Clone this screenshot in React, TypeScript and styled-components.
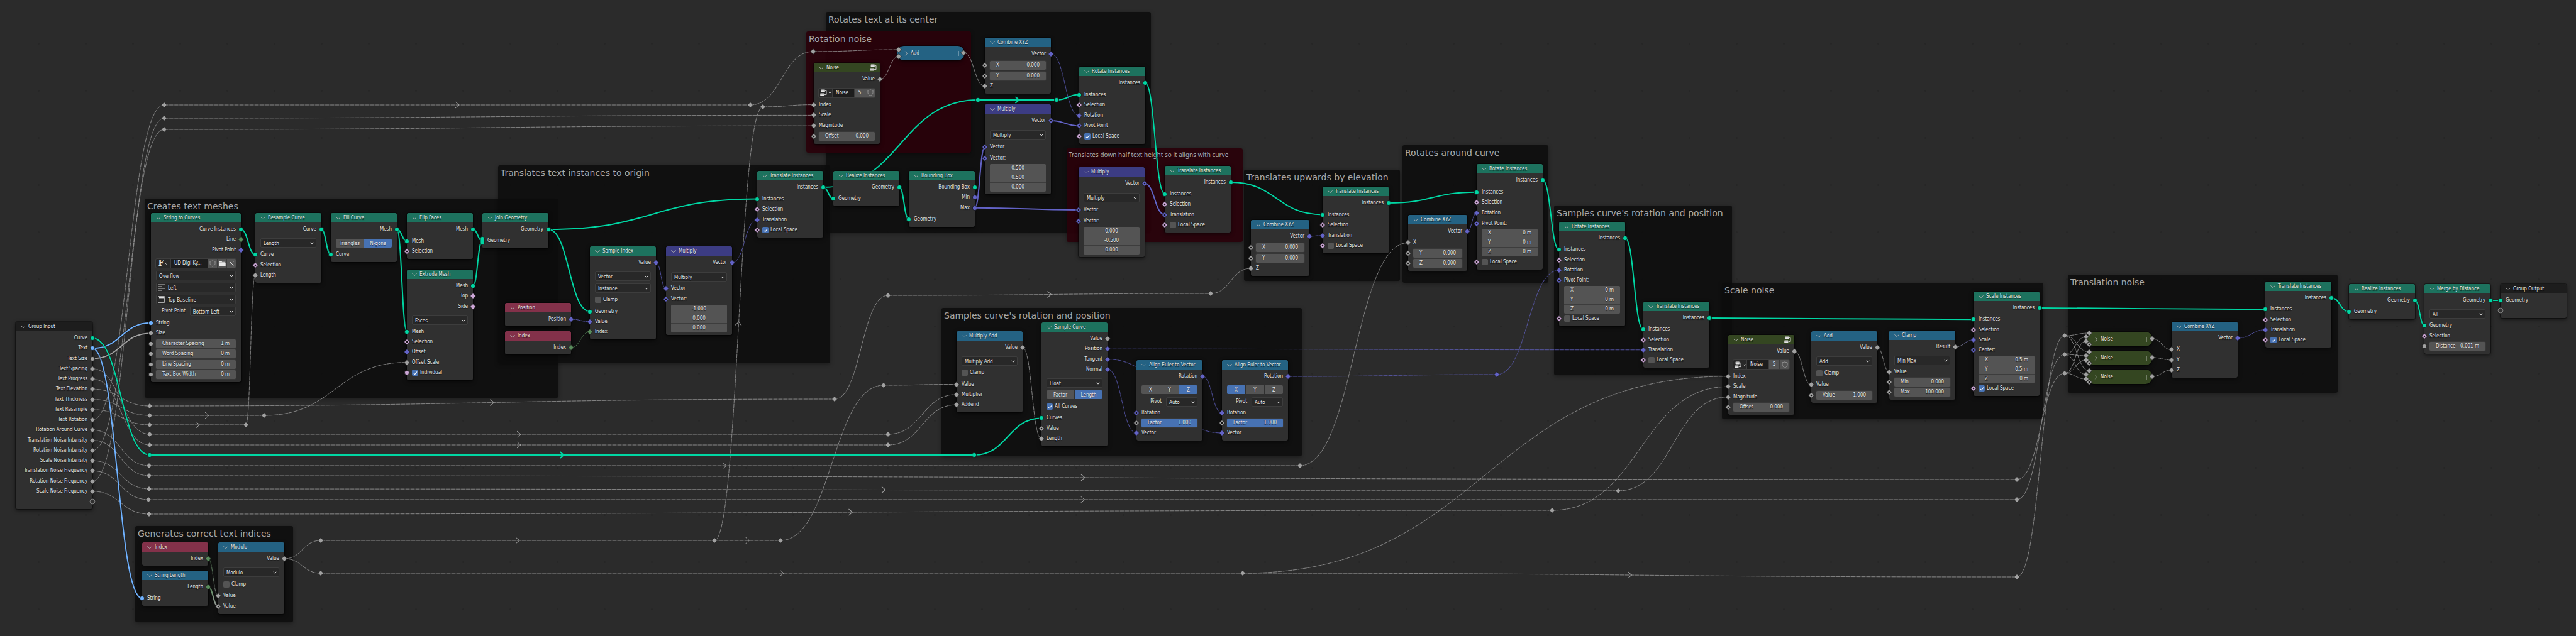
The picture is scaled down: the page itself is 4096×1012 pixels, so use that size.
import React, { useLayoutEffect, useRef, useState } from "react";
import styled, { createGlobalStyle, css } from "styled-components";

/* ---------- theme ---------- */

const SOCKET = {
  geo: "#00d6a3",
  float: "#a1a1a1",
  vec: "#6363c7",
  bool: "#cca6d6",
  int: "#598c5c",
  str: "#70b2ff",
} as const;

const HEADER = {
  geometry: "#1d725e",
  input: "#83314a",
  converter: "#246283",
  vector: "#3c3c83",
  group: "#344621",
  io: "#1d1d1d",
} as const;

type SocketType = keyof typeof SOCKET;
type HeaderType = keyof typeof HEADER;
type Shape = "dot" | "diamond" | "ring" | "open" | "multi";

const GlobalStyle = createGlobalStyle`
  body { margin: 0; background: #2b2b2b; }
  #root { font-family: "DejaVu Sans Condensed", "DejaVu Sans", sans-serif; font-size: 8px; line-height: 16px; color: #e6e6e6; }
  input, select, button { font: inherit; color: inherit; margin: 0; padding: 0; border: 0; background: none; }
`;

/* ---------- canvas ---------- */

const Canvas = styled.main`
  position: relative;
  width: 100%;
  height: 100vh;
  overflow: hidden;
  background-color: #2b2b2b;
  background-image: radial-gradient(circle, #262626 1px, transparent 2px);
  background-size: 75px 75px;
  background-position: 24px 32px;
`;

const Wires = styled.svg`
  position: absolute;
  inset: 0;
  width: 100%;
  height: 100%;
  fill: none;
`;

interface Box {
  $x: number;
  $y: number;
  $w: number;
  $h: number;
}

const FrameBox = styled.section<Box & { $red?: boolean; $small?: boolean }>`
  position: absolute;
  left: ${(p) => p.$x}px;
  top: ${(p) => p.$y}px;
  width: ${(p) => p.$w}px;
  height: ${(p) => p.$h}px;
  box-sizing: border-box;
  padding: ${(p) => (p.$small ? "1px 3px" : "3px 4px")};
  border-radius: 3px;
  background: ${(p) => (p.$red ? "rgba(41, 2, 11, 0.95)" : "rgba(12, 12, 12, 0.85)")};
  box-shadow: 0 2px 6px rgba(0, 0, 0, 0.35);
  h2 {
    margin: 0;
    font-family: ${(p) => (p.$small ? '"Noto Sans"' : '"DejaVu Sans"')}, sans-serif;
    font-weight: 400;
    font-size: ${(p) => (p.$small ? 10 : 14)}px;
    line-height: 18px;
    color: #a8a8a8;
    white-space: nowrap;
  }
`;

const NodeBox = styled.article<Box>`
  position: absolute;
  left: ${(p) => p.$x}px;
  top: ${(p) => p.$y}px;
  width: ${(p) => p.$w}px;
  height: ${(p) => p.$h}px;
  display: flex;
  flex-direction: column;
  border-radius: 3px;
  background: #303030;
  box-shadow: 0 0 0 1px rgba(0, 0, 0, 0.35), 0 2px 6px rgba(0, 0, 0, 0.6);
  text-shadow: 0 1px 1px rgba(0, 0, 0, 0.6);
  white-space: nowrap;
`;

const NodeHeader = styled.header<{ $kind: HeaderType }>`
  flex: none;
  display: flex;
  align-items: center;
  gap: 4px;
  height: 15px;
  padding: 0 5px 0 8px;
  border-radius: 3px 3px 0 0;
  background: ${(p) => HEADER[p.$kind]};
  h3 {
    flex: 1;
    margin: 0;
    font-size: 8px;
    font-weight: 400;
    line-height: 15px;
  }
`;

const IconButton = styled.button`
  flex: none;
  display: flex;
  align-items: center;
  justify-content: center;
`;

const NodeBody = styled.div`
  flex: 1;
  display: flex;
  flex-direction: column;
  justify-content: space-between;
  padding: 3px 0 4px;
`;

const OutRow = styled.div`
  flex: none;
  display: flex;
  align-items: center;
  justify-content: flex-end;
  gap: 3px;
  height: 16px;
`;

const InRow = styled.div`
  flex: none;
  display: flex;
  align-items: center;
  gap: 3px;
  height: 16px;
  padding-right: 8px;
  ${OutRow} + & {
    margin-top: 2px;
  }
`;

const Fields = styled.div`
  flex: none;
  display: flex;
  flex-direction: column;
  gap: 3px;
  margin: 5px 0 2px;
  padding: 0 8px;
`;

const FieldRow = styled.div`
  display: flex;
  align-items: center;
  height: 16px;
`;

const SocketIcon = styled.svg<{ $side: "in" | "out" }>`
  flex: none;
  width: 10px;
  height: 16px;
  overflow: visible;
  ${(p) => (p.$side === "in" ? css`margin-left: -5px;` : css`margin-right: -5px;`)}
`;

/* ---------- controls ---------- */

const NumberBox = styled.label<{ $filled?: boolean }>`
  flex: 1;
  display: flex;
  align-items: center;
  min-width: 0;
  height: 14px;
  padding: 0 10px;
  border-radius: 2px;
  background: ${(p) => (p.$filled ? "#4772b3" : "#545454")};
  box-shadow: 0 0 0 1px rgba(60, 60, 60, 0.6);
  input {
    flex: 1;
    min-width: 0;
    width: 20px;
    height: 14px;
    text-align: right;
    text-shadow: inherit;
  }
`;

const VectorBox = styled.div`
  flex: none;
  display: grid;
  grid-template-rows: repeat(3, 14px);
  gap: 1px;
  margin: 0 8px;
  border-radius: 2px;
  overflow: hidden;
  background: #3d3d3d;
  ${NumberBox} {
    border-radius: 0;
    box-shadow: none;
  }
`;

const CenterInput = styled.input`
  width: 100%;
  height: 14px;
  background: #545454 !important;
  text-align: center;
  text-shadow: inherit;
`;

const SelectBox = styled.div<{ $icon?: boolean }>`
  position: relative;
  flex: 1;
  display: flex;
  min-width: 0;
  select {
    flex: 1;
    min-width: 0;
    height: 15px;
    padding: 0 12px 0 ${(p) => (p.$icon ? 18 : 4)}px;
    border: 1px solid #3d3d3d;
    border-radius: 2px;
    background: #282828;
    appearance: none;
    text-shadow: inherit;
  }
  svg {
    position: absolute;
    pointer-events: none;
  }
`;

const CheckLabel = styled.label`
  display: flex;
  align-items: center;
  gap: 3px;
  input {
    display: grid;
    place-items: center;
    width: 10px;
    height: 10px;
    border-radius: 2px;
    background: #545454;
    appearance: none;
  }
  input:checked {
    background: #4772b3;
  }
  input:checked::after {
    content: "";
    width: 2px;
    height: 5px;
    border: solid #fff;
    border-width: 0 1px 1px 0;
    transform: rotate(40deg);
  }
`;

const Segments = styled.div`
  flex: 1;
  display: flex;
  gap: 1px;
  border-radius: 2px;
  overflow: hidden;
`;

const Segment = styled.button<{ $on: boolean }>`
  flex: 1;
  height: 14px;
  background: ${(p) => (p.$on ? "#4772b3" : "#545454")} !important;
  text-shadow: inherit;
`;

const FieldLabel = styled.label`
  flex: none;
  padding: 0 7px 0 9px;
`;

const PivotLabel = styled.label`
  flex: none;
  width: 32px;
  padding-right: 7px;
  text-align: right;
`;

const DataBlock = styled.div`
  flex: 1;
  display: flex;
  height: 14px;
  gap: 1px;
  border-radius: 2px;
  overflow: hidden;
  background: #3d3d3d;
  box-shadow: 0 0 0 1px #3d3d3d;
`;

const BlockButton = styled.button<{ $w: number; $dark?: boolean }>`
  display: flex;
  align-items: center;
  justify-content: center;
  gap: 2px;
  width: ${(p) => p.$w}px;
  background: ${(p) => (p.$dark ? "#282828" : "#545454")} !important;
`;

const BlockName = styled.input`
  flex: 1;
  min-width: 0;
  width: 20px;
  padding: 0 5px !important;
  background: #1d1d1d !important;
`;

const Pill = styled.article<Box & { $kind: HeaderType }>`
  position: absolute;
  left: ${(p) => p.$x}px;
  top: ${(p) => p.$y}px;
  width: ${(p) => p.$w}px;
  height: ${(p) => p.$h}px;
  box-sizing: border-box;
  display: flex;
  align-items: center;
  gap: 3px;
  padding: 0 7px 0 10px;
  border-radius: 10px;
  background: ${(p) => HEADER[p.$kind]};
  box-shadow: 0 0 0 1px rgba(0, 0, 0, 0.35), 0 2px 6px rgba(0, 0, 0, 0.6);
  text-shadow: 0 1px 1px rgba(0, 0, 0, 0.6);
  h3 {
    flex: 1;
    margin: 0;
    font-size: 8px;
    font-weight: 400;
  }
`;

const Pin = styled.span<{ $x: number; $y: number }>`
  position: absolute;
  left: ${(p) => p.$x - 5}px;
  top: ${(p) => p.$y - 8}px;
  display: flex;
  svg {
    margin: 0;
  }
`;

/* ---------- icons ---------- */

const Chevron = ({ dir = "down", color = "#b0b0b0" }: { dir?: "down" | "right"; color?: string }) => (
  <svg width="8" height="8" viewBox="0 0 8 8" fill="none" stroke={color} strokeWidth="1">
    <path d={dir === "down" ? "M0.5 2.3 4 5.8 7.5 2.3" : "M2.5 0.8 5.7 4 2.5 7.2"} />
  </svg>
);

const SelectArrow = () => (
  <svg width="6" height="6" viewBox="0 0 6 6" fill="none" stroke="#dcdcdc" style={{ right: 4, top: 5 }}>
    <path d="M0.8 1.8 3 4.2 5.2 1.8" />
  </svg>
);

const SmallArrow = () => (
  <svg width="5" height="5" viewBox="0 0 6 6" fill="none" stroke="#dcdcdc">
    <path d="M0.8 1.8 3 4.2 5.2 1.8" />
  </svg>
);

const Shield = () => (
  <svg width="10" height="11" viewBox="0 0 10 11" fill="none" stroke="#949494">
    <path d="M5 0.8C3.8 1.6 2.4 1.8 1 1.8V5.6C1 7.6 3 9.4 5 10.2 7 9.4 9 7.6 9 5.6V1.8C7.6 1.8 6.2 1.6 5 0.8Z" />
  </svg>
);

const NodeTree = () => (
  <svg width="11" height="11" viewBox="0 0 11 11">
    <rect x="1.6" y="0.4" width="6.2" height="4" rx="0.6" fill="#e4e4e4" />
    <rect x="0.2" y="6.6" width="6.2" height="4" rx="0.6" fill="#e4e4e4" />
    <path d="M8 2.4H10V8.6H6.8" fill="none" stroke="#d0d0d0" />
    <path d="M1.6 1.8H7.8M0.2 8H6.4" stroke="#777" strokeWidth="0.5" />
  </svg>
);

const Folder = () => (
  <svg width="11" height="9" viewBox="0 0 11 9" fill="#e8e8e8">
    <path d="M0.3 0.4H4.2L5.2 1.7H10.2V2.8H0.3Z" />
    <path d="M0.3 3.5H10.7V8.7H0.3Z" />
  </svg>
);

const Cross = () => (
  <svg width="7" height="7" viewBox="0 0 7 7" stroke="#d8d8d8">
    <path d="M0.7 0.7 6.3 6.3M6.3 0.7 0.7 6.3" />
  </svg>
);

const AlignLeft = () => (
  <svg width="11" height="11" viewBox="0 0 11 11" stroke="#c8c8c8" style={{ left: 3, top: 2 }}>
    <path d="M0 1H11M0 4H6.5M0 7H11M0 10H6.5" />
  </svg>
);

const AlignTop = () => (
  <svg width="11" height="11" viewBox="0 0 11 11" fill="none" stroke="#a8a8a8" style={{ left: 3, top: 2 }}>
    <path d="M0.5 0.5H10.5V10.5H0.5Z" />
    <path d="M2 2.6H9" stroke="#e0e0e0" strokeWidth="1.6" />
  </svg>
);

const FontGlyph = styled.span`
  font: 700 12px/14px "DejaVu Serif", serif;
`;

const Grip = () => (
  <svg width="6" height="8" viewBox="0 0 6 8" stroke="#ffffff" strokeOpacity="0.3">
    <path d="M1.5 0V8M4.5 0V8" />
  </svg>
);

/* ---------- sockets and rows ---------- */

const shapeFor = (type: SocketType, shape: Shape) => {
  const c = SOCKET[type];
  const edge = "#131313";
  switch (shape) {
    case "dot":
      return <circle cx="5" cy="8" r="3.6" fill={c} stroke={edge} strokeWidth="0.8" />;
    case "open":
      return <circle cx="5" cy="8" r="4" fill="#303030" stroke="#8a8a8a" strokeWidth="0.9" />;
    case "multi":
      return <rect x="2" y="1.5" width="6" height="13" rx="2.6" fill={c} stroke={edge} strokeWidth="0.8" />;
    case "ring":
      return (
        <>
          <path d="M5 3.5 9.5 8 5 12.5 0.5 8Z" fill={c} stroke={edge} strokeWidth="0.8" />
          <circle cx="5" cy="8" r="1.3" fill={edge} />
        </>
      );
    default:
      return <path d="M5 3.5 9.5 8 5 12.5 0.5 8Z" fill={c} stroke={edge} strokeWidth="0.8" />;
  }
};

interface PortProps {
  port?: string;
  type: SocketType;
  shape?: Shape;
}

const Socket = ({ port, type, shape = "dot", side }: PortProps & { side: "in" | "out" }) => (
  <SocketIcon viewBox="0 0 10 16" $side={side} data-port={port}>
    {shapeFor(type, shape)}
  </SocketIcon>
);

const Out = ({ label, ...s }: PortProps & { label?: string }) => (
  <OutRow>
    <span>{label}</span>
    <Socket {...s} side="out" />
  </OutRow>
);

const In = ({ label, ...s }: PortProps & { label?: string }) => (
  <InRow>
    <Socket {...s} side="in" />
    <span>{label}</span>
  </InRow>
);

const NumField = ({ label, value, filled }: { label: string; value: string; filled?: boolean }) => (
  <NumberBox $filled={filled}>
    {label}
    <input type="text" defaultValue={value} />
  </NumberBox>
);

const Num = ({ label, value, filled, ...s }: PortProps & { label: string; value: string; filled?: boolean }) => (
  <InRow>
    <Socket {...s} side="in" />
    <NumField label={label} value={value} filled={filled} />
  </InRow>
);

const Check = ({ label, on }: { label: string; on?: boolean }) => (
  <CheckLabel>
    <input type="checkbox" defaultChecked={on} />
    {label}
  </CheckLabel>
);

const CheckIn = ({ label, on, ...s }: PortProps & { label: string; on?: boolean }) => (
  <InRow>
    <Socket {...s} side="in" />
    <Check label={label} on={on} />
  </InRow>
);

const Select = ({ value, name, icon, id }: { value: string; name: string; icon?: React.ReactNode; id?: string }) => (
  <SelectBox $icon={!!icon}>
    {icon}
    <select id={id} aria-label={id ? undefined : name} defaultValue={value}>
      <option>{value}</option>
    </select>
    <SelectArrow />
  </SelectBox>
);

const SelectRow = (p: { value: string; name: string; icon?: React.ReactNode }) => (
  <FieldRow>
    <Select {...p} />
  </FieldRow>
);

const LabelSelect = ({ id, label, value }: { id: string; label: string; value: string }) => (
  <FieldRow>
    <FieldLabel htmlFor={id}>{label}</FieldLabel>
    <Select id={id} name={label} value={value} />
  </FieldRow>
);

const Toggle = ({ options, on }: { options: string[]; on: string }) => (
  <FieldRow>
    <Segments role="group">
      {options.map((o) => (
        <Segment key={o} type="button" $on={o === on} aria-pressed={o === on}>
          {o}
        </Segment>
      ))}
    </Segments>
  </FieldRow>
);

const Vector = ({ name, values }: { name: string; values: string[] }) => (
  <VectorBox>
    {values.map((v, i) => (
      <CenterInput key={i} type="text" aria-label={`${name} ${"XYZ"[i]}`} defaultValue={v} />
    ))}
  </VectorBox>
);

const VectorXYZ = ({ values }: { values: string[] }) => (
  <VectorBox>
    {values.map((v, i) => (
      <NumField key={i} label={"XYZ"[i]} value={v} />
    ))}
  </VectorBox>
);

const GroupPicker = () => (
  <FieldRow>
    <DataBlock>
      <BlockButton type="button" $w={21} $dark aria-label="Browse groups">
        <NodeTree />
        <SmallArrow />
      </BlockButton>
      <BlockName type="text" aria-label="Group name" defaultValue="Noise" />
      <BlockButton type="button" $w={16}>
        5
      </BlockButton>
      <BlockButton type="button" $w={15} aria-label="Fake user">
        <Shield />
      </BlockButton>
    </DataBlock>
  </FieldRow>
);

interface NodeProps {
  title: string;
  kind: HeaderType;
  x: number;
  y: number;
  w?: number;
  h: number;
  extra?: React.ReactNode;
  children: React.ReactNode;
}

const Node = ({ title, kind, x, y, w = 105, h, extra, children }: NodeProps) => (
  <NodeBox $x={x} $y={y} $w={w} $h={h}>
    <NodeHeader $kind={kind}>
      <IconButton type="button" aria-label={`Collapse ${title}`}>
        <Chevron />
      </IconButton>
      <h3>{title}</h3>
      {extra}
    </NodeHeader>
    <NodeBody>{children}</NodeBody>
  </NodeBox>
);

/* ---------- node kinds used several times ---------- */

interface Placed {
  id: string;
  x: number;
  y: number;
}

const TranslateInstances = ({ id, x, y, h = 106, local, ring }: Placed & { h?: number; local?: boolean; ring?: boolean }) => (
  <Node title="Translate Instances" kind="geometry" x={x} y={y} h={h}>
    <Out port={`${id}.out`} type="geo" label="Instances" />
    <In port={`${id}.in`} type="geo" label="Instances" />
    <In type="bool" shape="ring" label="Selection" />
    <In port={`${id}.vec`} type="vec" shape={ring ? "ring" : "diamond"} label="Translation" />
    <CheckIn type="bool" shape="ring" label="Local Space" on={local} />
  </Node>
);

const RotateInstances = ({ id, x, y, h }: Placed & { h: number }) => (
  <Node title="Rotate Instances" kind="geometry" x={x} y={y} h={h}>
    <Out port={`${id}.out`} type="geo" label="Instances" />
    <In port={`${id}.in`} type="geo" label="Instances" />
    <In type="bool" shape="ring" label="Selection" />
    <In port={`${id}.rot`} type="vec" shape="diamond" label="Rotation" />
    <In type="vec" shape="ring" label="Pivot Point:" />
    <VectorXYZ values={["0 m", "0 m", "0 m"]} />
    <CheckIn type="bool" shape="ring" label="Local Space" />
  </Node>
);

const VectorMultiply = ({ id, x, y, h = 143, values, ring = true }: Placed & { h?: number; values: string[]; ring?: boolean }) => (
  <Node title="Multiply" kind="vector" x={x} y={y} h={h}>
    <Out port={`${id}.out`} type="vec" shape={ring ? "ring" : "diamond"} label="Vector" />
    <Fields>
      <SelectRow name="Operation" value="Multiply" />
    </Fields>
    <In port={`${id}.in`} type="vec" shape={ring ? "ring" : "diamond"} label="Vector" />
    <In type="vec" shape="ring" label="Vector:" />
    <Vector name="Vector" values={values} />
  </Node>
);

const CombineXYZ = ({ id, x, y, w, linked }: Placed & { w?: number; linked: string }) => (
  <Node title="Combine XYZ" kind="converter" x={x} y={y} w={w} h={89}>
    <Out port={`${id}.out`} type="vec" shape="diamond" label="Vector" />
    {["X", "Y", "Z"].map((a) =>
      linked.includes(a) ? (
        <In key={a} port={`${id}.${a}`} type="float" shape="diamond" label={a} />
      ) : (
        <Num key={a} type="float" shape="ring" label={a} value="0.000" />
      )
    )}
  </Node>
);

const NoiseGroup = ({ id, x, y, h }: Placed & { h: number }) => (
  <Node title="Noise" kind="group" x={x} y={y} h={h} extra={<NodeTree />}>
    <Out port={`${id}.out`} type="float" shape="diamond" label="Value" />
    <Fields>
      <GroupPicker />
    </Fields>
    <In port={`${id}.index`} type="float" shape="diamond" label="Index" />
    <In port={`${id}.scale`} type="float" shape="diamond" label="Scale" />
    <In port={`${id}.mag`} type="float" shape="diamond" label="Magnitude" />
    <Num type="float" shape="ring" label="Offset" value="0.000" />
  </Node>
);

const AlignEuler = ({ id, x, axis, rotated }: { id: string; x: number; axis: string; rotated?: boolean }) => (
  <Node title="Align Euler to Vector" kind="converter" x={x} y={573} h={128}>
    <Out port={`${id}.out`} type="vec" shape="diamond" label="Rotation" />
    <Fields>
      <Toggle options={["X", "Y", "Z"]} on={axis} />
      <FieldRow>
        <PivotLabel htmlFor={`${id}-pivot`}>Pivot</PivotLabel>
        <Select id={`${id}-pivot`} name="Pivot" value="Auto" />
      </FieldRow>
    </Fields>
    <In port={`${id}.rot`} type="vec" shape={rotated ? "diamond" : "ring"} label="Rotation" />
    <Num type="float" shape="ring" label="Factor" value="1.000" filled />
    <In port={`${id}.vec`} type="vec" shape="diamond" label="Vector" />
  </Node>
);

const IndexNode = ({ id, x, y, title = "Index", type = "int" }: Placed & { title?: string; type?: SocketType }) => (
  <Node title={title} kind="input" x={x} y={y} h={37}>
    <Out port={`${id}.out`} type={type} shape="diamond" label={title} />
  </Node>
);

const Collapsed = ({ id, x, y, w, kind, title, ins, out }: Placed & {
  w: number;
  kind: HeaderType;
  title: string;
  ins: [number, number, Shape][];
  out: [number, number];
}) => (
  <Pill $x={x} $y={y} $w={w} $h={23} $kind={kind}>
    <IconButton type="button" aria-label={`Expand ${title}`}>
      <Chevron dir="right" />
    </IconButton>
    <h3>{title}</h3>
    <Grip />
    {ins.map(([px, py, shape], i) => (
      <Pin key={i} $x={px} $y={py}>
        <Socket port={`${id}.in${i}`} type="float" shape={shape} side="in" />
      </Pin>
    ))}
    <Pin $x={out[0]} $y={out[1]}>
      <Socket port={`${id}.out`} type="float" shape="diamond" side="out" />
    </Pin>
  </Pill>
);

/* ---------- reroutes and links ---------- */

const REROUTES: [string, number, number, SocketType][] = [
  ["r.elev", 238, 646, "float"],
  ["r.elev2", 1327, 635, "float"],
  ["r.elev3", 1412, 470, "float"],
  ["r.elev4", 1925, 467, "float"],
  ["r.thick", 238, 661, "float"],
  ["r.thick2", 420, 661, "float"],
  ["r.res", 238, 676, "float"],
  ["r.res2", 391, 676, "float"],
  ["r.space", 238, 691, "float"],
  ["r.space2", 1412, 691, "float"],
  ["r.prog", 238, 708, "float"],
  ["r.prog2", 1412, 708, "float"],
  ["r.curve", 238, 724, "geo"],
  ["r.around", 237, 741, "float"],
  ["r.around2", 2067, 741, "float"],
  ["r.transI", 237, 757, "float"],
  ["r.transI2", 3207, 763, "float"],
  ["r.scaleI", 237, 778, "float"],
  ["r.scaleI2", 2573, 781, "float"],
  ["r.transF", 236, 795, "float"],
  ["r.transF2", 3207, 795, "float"],
  ["r.scaleF", 237, 818, "float"],
  ["r.scaleF2", 2468, 812, "float"],
  ["r.rot", 261, 167, "float"],
  ["r.rotB", 1193, 167, "float"],
  ["r.rotF", 261, 188, "float"],
  ["r.rotI", 261, 206, "float"],
  ["r.rot2", 1293, 82, "float"],
  ["r.index", 1213, 170, "float"],
  ["r.curve2", 1549, 724, "geo"],
  ["r.inst", 1555, 159, "geo"],
  ["r.inst2", 1680, 159, "geo"],
  ["r.idxA", 510, 860, "float"],
  ["r.idxA2", 1136, 860, "float"],
  ["r.idxA3", 1241, 860, "float"],
  ["r.val", 1405, 613, "float"],
  ["r.idxB", 510, 912, "float"],
  ["r.idxB2", 1976, 912, "float"],
  ["r.idxB3", 3207, 918, "float"],
  ["r.euler", 2380, 596, "vec"],
  ["r.n1", 3283, 534, "float"],
  ["r.n2", 3283, 564, "float"],
  ["r.n3", 3283, 594, "float"],
];

type LinkDef = [string, string, SocketType, "solid" | "dash", ("arrow" | SocketType)?];

const LINKS: LinkDef[] = [
  ["gi.elev", "r.elev", "float", "dash"],
  ["r.elev", "r.elev2", "float", "dash", "arrow"],
  ["r.elev2", "r.elev3", "float", "dash"],
  ["r.elev3", "r.elev4", "float", "dash", "arrow"],
  ["r.elev4", "cxyz2.Z", "float", "dash"],
  ["gi.thick", "r.thick", "float", "dash"],
  ["r.thick", "r.thick2", "float", "dash", "arrow"],
  ["r.thick2", "extrude.scale", "float", "dash"],
  ["gi.res", "r.res", "float", "dash"],
  ["r.res", "r.res2", "float", "dash", "arrow"],
  ["r.res2", "resample.len", "float", "dash"],
  ["gi.space", "r.space", "float", "dash"],
  ["r.space", "r.space2", "float", "dash", "arrow"],
  ["r.space2", "madd.mul", "float", "dash"],
  ["gi.prog", "r.prog", "float", "dash"],
  ["r.prog", "r.prog2", "float", "dash", "arrow"],
  ["r.prog2", "madd.add", "float", "dash"],
  ["gi.around", "r.around", "float", "dash"],
  ["r.around", "r.around2", "float", "dash", "arrow"],
  ["r.around2", "cxyz3.X", "float", "dash"],
  ["gi.transI", "r.transI", "float", "dash"],
  ["r.transI", "r.transI2", "float", "dash", "arrow"],
  ["r.transI2", "r.n3", "float", "dash"],
  ["gi.scaleI", "r.scaleI", "float", "dash"],
  ["r.scaleI", "r.scaleI2", "float", "dash", "arrow"],
  ["r.scaleI2", "noise2.mag", "float", "dash"],
  ["gi.transF", "r.transF", "float", "dash"],
  ["r.transF", "r.transF2", "float", "dash", "arrow"],
  ["r.transF2", "r.n2", "float", "dash"],
  ["gi.scaleF", "r.scaleF", "float", "dash"],
  ["r.scaleF", "r.scaleF2", "float", "dash", "arrow"],
  ["r.scaleF2", "noise2.scale", "float", "dash"],
  ["gi.rot", "r.rot", "float", "dash"],
  ["gi.rotI", "r.rotI", "float", "dash"],
  ["gi.rotF", "r.rotF", "float", "dash"],
  ["r.rot", "r.rotB", "float", "dash", "arrow"],
  ["r.rotB", "r.rot2", "float", "dash"],
  ["r.rotF", "noise1.scale", "float", "dash"],
  ["r.rotI", "noise1.mag", "float", "dash"],
  ["r.rot2", "add.in0", "float", "dash"],
  ["noise1.out", "add.in1", "float", "dash"],
  ["add.out", "cxyz1.Z", "float", "dash"],
  ["modulo.out", "r.idxA", "float", "dash"],
  ["modulo.out", "r.idxB", "float", "dash"],
  ["r.idxA", "r.idxA2", "float", "dash", "arrow"],
  ["r.idxA2", "r.idxA3", "float", "dash", "arrow"],
  ["r.idxA2", "r.index", "float", "dash", "arrow"],
  ["r.index", "noise1.index", "float", "dash"],
  ["r.idxA3", "r.val", "float", "dash"],
  ["r.val", "madd.val", "float", "dash"],
  ["r.idxB", "r.idxB2", "float", "dash", "arrow"],
  ["r.idxB2", "r.idxB3", "float", "dash", "arrow"],
  ["r.idxB2", "noise2.index", "float", "dash"],
  ["r.idxB3", "r.n1", "float", "dash"],
  ["index2.out", "modulo.a", "int", "dash", "float"],
  ["strlen.out", "modulo.b", "int", "solid", "float"],
  ["gi.text", "strlen.in", "str", "solid"],
  ["gi.text", "s2c.str", "str", "solid"],
  ["gi.size", "s2c.size", "float", "solid"],
  ["s2c.out", "resample.in", "geo", "solid"],
  ["resample.out", "fill.in", "geo", "solid"],
  ["fill.out", "flip.in", "geo", "solid"],
  ["fill.out", "extrude.in", "geo", "solid"],
  ["flip.out", "join.in", "geo", "solid"],
  ["extrude.out", "join.in", "geo", "solid"],
  ["join.out", "ti1.in", "geo", "solid"],
  ["join.out", "sidx.geo", "geo", "solid"],
  ["pos.out", "sidx.val", "vec", "dash"],
  ["index1.out", "sidx.idx", "int", "dash"],
  ["sidx.out", "mul1.in", "vec", "dash"],
  ["mul1.out", "ti1.vec", "vec", "dash"],
  ["ti1.out", "real1.in", "geo", "solid"],
  ["ti1.out", "r.inst", "geo", "solid"],
  ["r.inst", "r.inst2", "geo", "solid", "arrow"],
  ["r.inst2", "rot1.in", "geo", "solid"],
  ["real1.out", "bbox.in", "geo", "solid"],
  ["bbox.max", "mul2.in", "vec", "solid"],
  ["bbox.max", "mul3.in", "vec", "solid"],
  ["cxyz1.out", "rot1.rot", "vec", "dash"],
  ["mul2.out", "rot1.pivot", "vec", "solid"],
  ["rot1.out", "ti2.in", "geo", "solid"],
  ["mul3.out", "ti2.vec", "vec", "solid"],
  ["ti2.out", "ti3.in", "geo", "solid"],
  ["cxyz2.out", "ti3.vec", "vec", "dash"],
  ["ti3.out", "rot2.in", "geo", "solid"],
  ["cxyz3.out", "rot2.rot", "vec", "dash"],
  ["rot2.out", "rot3.in", "geo", "solid"],
  ["rot3.out", "ti4.in", "geo", "solid"],
  ["ti4.out", "scale.in", "geo", "solid"],
  ["scale.out", "ti5.in", "geo", "solid"],
  ["ti5.out", "real2.in", "geo", "solid"],
  ["real2.out", "merge.in", "geo", "solid"],
  ["merge.out", "go.in", "geo", "solid"],
  ["gi.curve", "r.curve", "geo", "solid"],
  ["r.curve", "r.curve2", "geo", "solid", "arrow"],
  ["r.curve2", "scurve.in", "geo", "solid"],
  ["madd.out", "scurve.len", "float", "dash"],
  ["scurve.pos", "ti4.vec", "vec", "dash"],
  ["scurve.tan", "align2.vec", "vec", "dash"],
  ["scurve.norm", "align1.vec", "vec", "dash"],
  ["align1.out", "align2.rot", "vec", "dash"],
  ["align2.out", "r.euler", "vec", "dash"],
  ["r.euler", "rot3.rot", "vec", "dash"],
  ["noise2.out", "add2.in", "float", "dash"],
  ["add2.out", "clamp.in", "float", "dash"],
  ["clamp.out", "scale.vec", "float", "dash", "vec"],
  ["n1.out", "cxyz4.X", "float", "dash"],
  ["n2.out", "cxyz4.Y", "float", "dash"],
  ["n3.out", "cxyz4.Z", "float", "dash"],
  ["cxyz4.out", "ti5.vec", "vec", "dash"],
  ["r.n1", "n1.in0", "float", "dash"],
  ["r.n1", "n2.in0", "float", "dash"],
  ["r.n1", "n3.in0", "float", "dash"],
  ["r.n2", "n1.in1", "float", "dash"],
  ["r.n2", "n2.in1", "float", "dash"],
  ["r.n2", "n3.in1", "float", "dash"],
  ["r.n3", "n1.in2", "float", "dash"],
  ["r.n3", "n2.in2", "float", "dash"],
  ["r.n3", "n3.in2", "float", "dash"],
];

type Points = Record<string, [number, number]>;

const Link = ({ def, pts, index }: { def: LinkDef; pts: Points; index: number }) => {
  const [from, to, type, style, extra] = def;
  const a = pts[from];
  const b = pts[to];
  if (!a || !b) return null;
  const d = Math.abs(b[0] - a[0]) / 2;
  const path = `M${a[0]} ${a[1]}C${a[0] + d} ${a[1]} ${b[0] - d} ${b[1]} ${b[0]} ${b[1]}`;
  const blend = extra && extra !== "arrow" ? extra : null;
  const stroke = blend ? `url(#blend${index})` : SOCKET[type];
  const mx = (a[0] + b[0]) / 2;
  const my = (a[1] + b[1]) / 2;
  const angle = (Math.atan2(b[1] - a[1], b[0] - a[0]) * 180) / Math.PI;
  return (
    <g>
      {blend && (
        <linearGradient id={`blend${index}`} gradientUnits="userSpaceOnUse" x1={a[0]} y1={a[1]} x2={b[0]} y2={b[1]}>
          <stop offset="0" stopColor={SOCKET[type]} />
          <stop offset="1" stopColor={SOCKET[blend]} />
        </linearGradient>
      )}
      {style === "solid" ? (
        <>
          <path d={path} stroke="#101010" strokeWidth="3" strokeOpacity="0.6" />
          <path d={path} stroke={stroke} strokeWidth="2" />
        </>
      ) : (
        <>
          <path d={path} stroke={stroke} strokeWidth="1" strokeOpacity="0.35" />
          <path d={path} stroke={stroke} strokeWidth="1" strokeOpacity="0.6" strokeDasharray="6 2" />
        </>
      )}
      {extra === "arrow" && (
        <path
          d="M-3 -5 3 0 -3 5"
          stroke={stroke}
          strokeWidth={style === "solid" ? 2 : 1}
          transform={`translate(${mx} ${my}) rotate(${angle})`}
        />
      )}
    </g>
  );
};

/* ---------- frames ---------- */

interface FrameDef {
  t: string;
  b: [number, number, number, number];
  red?: boolean;
  small?: boolean;
}

const FRAMES: FrameDef[] = [
  { t: "Creates text meshes", b: [230, 316, 658, 317] },
  { t: "Translates text instances to origin", b: [792, 263, 528, 315] },
  { t: "Rotates text at its center", b: [1313, 19, 517, 351] },
  { t: "Rotation noise", b: [1282, 50, 262, 193], red: true },
  { t: "Translates down half text height so it aligns with curve", b: [1696, 236, 280, 149], red: true, small: true },
  { t: "Translates upwards by elevation", b: [1978, 270, 248, 177] },
  { t: "Rotates around curve", b: [2230, 231, 232, 219] },
  { t: "Samples curve's rotation and position", b: [2471, 327, 283, 270] },
  { t: "Scale noise", b: [2738, 450, 511, 217] },
  { t: "Translation noise", b: [3288, 437, 429, 188] },
  { t: "Samples curve's rotation and position", b: [1497, 490, 573, 236] },
  { t: "Generates correct text indices", b: [215, 837, 251, 153] },
];

const GROUP_INPUTS: [string, string, SocketType, Shape][] = [
  ["curve", "Curve", "geo", "dot"],
  ["text", "Text", "str", "dot"],
  ["size", "Text Size", "float", "dot"],
  ["space", "Text Spacing", "float", "diamond"],
  ["prog", "Text Progress", "float", "diamond"],
  ["elev", "Text Elevation", "float", "diamond"],
  ["thick", "Text Thickness", "float", "diamond"],
  ["res", "Text Resample", "float", "diamond"],
  ["rot", "Text Rotation", "float", "diamond"],
  ["around", "Rotation Around Curve", "float", "diamond"],
  ["transI", "Translation Noise Intensity", "float", "diamond"],
  ["rotI", "Rotation Noise Intensity", "float", "diamond"],
  ["scaleI", "Scale Noise Intensity", "float", "diamond"],
  ["transF", "Translation Noise Frequency", "float", "diamond"],
  ["rotF", "Rotation Noise Frequency", "float", "diamond"],
  ["scaleF", "Scale Noise Frequency", "float", "diamond"],
];

const NOISE_PINS: [number, number, Shape][] = [
  [3, 2, "diamond"],
  [-2, 8, "diamond"],
  [-2, 15, "diamond"],
  [3, 20, "ring"],
];

/* ---------- editor ---------- */

export default function App() {
  const canvas = useRef<HTMLElement>(null);
  const [pts, setPts] = useState<Points>({});

  useLayoutEffect(() => {
    const measure = () => {
      const root = canvas.current;
      if (!root) return;
      const o = root.getBoundingClientRect();
      const next: Points = {};
      root.querySelectorAll("[data-port]").forEach((el) => {
        const r = el.getBoundingClientRect();
        next[el.getAttribute("data-port") as string] = [r.left - o.left + r.width / 2, r.top - o.top + r.height / 2];
      });
      setPts(next);
    };
    measure();
    window.addEventListener("resize", measure);
    return () => window.removeEventListener("resize", measure);
  }, []);

  return (
    <>
      <GlobalStyle />
      <Canvas ref={canvas}>
        {FRAMES.map((f, i) => (
          <FrameBox key={i} $x={f.b[0]} $y={f.b[1]} $w={f.b[2]} $h={f.b[3]} $red={f.red} $small={f.small}>
            <h2>{f.t}</h2>
          </FrameBox>
        ))}

        <Wires aria-hidden="true">
          {LINKS.map((l, i) => (
            <Link key={i} def={l} pts={pts} index={i} />
          ))}
        </Wires>

        <Node title="Group Input" kind="io" x={25} y={512} w={122} h={298}>
          {GROUP_INPUTS.map(([id, label, type, shape]) => (
            <Out key={id} port={`gi.${id}`} type={type} shape={shape} label={label} />
          ))}
          <Out type="float" shape="open" />
        </Node>

        <Node title="String to Curves" kind="geometry" x={240} y={339} w={143} h={269}>
          <Out port="s2c.out" type="geo" label="Curve Instances" />
          <Out type="int" shape="diamond" label="Line" />
          <Out type="vec" shape="diamond" label="Pivot Point" />
          <Fields>
            <FieldRow>
              <DataBlock>
                <BlockButton type="button" $w={23} $dark aria-label="Browse fonts">
                  <FontGlyph>F</FontGlyph>
                  <SmallArrow />
                </BlockButton>
                <BlockName type="text" aria-label="Font" defaultValue="UD Digi Ky..." />
                <BlockButton type="button" $w={14} aria-label="Fake user">
                  <Shield />
                </BlockButton>
                <BlockButton type="button" $w={14} aria-label="Open font">
                  <Folder />
                </BlockButton>
                <BlockButton type="button" $w={14} aria-label="Unlink font">
                  <Cross />
                </BlockButton>
              </DataBlock>
            </FieldRow>
            <SelectRow name="Overflow" value="Overflow" />
            <SelectRow name="Horizontal align" value="Left" icon={<AlignLeft />} />
            <SelectRow name="Vertical align" value="Top Baseline" icon={<AlignTop />} />
            <LabelSelect id="s2c-pivot" label="Pivot Point" value="Bottom Left" />
          </Fields>
          <In port="s2c.str" type="str" label="String" />
          <In port="s2c.size" type="float" label="Size" />
          <Num type="float" label="Character Spacing" value="1 m" />
          <Num type="float" label="Word Spacing" value="0 m" />
          <Num type="float" label="Line Spacing" value="0 m" />
          <Num type="float" label="Text Box Width" value="0 m" />
        </Node>

        <Node title="Resample Curve" kind="geometry" x={406} y={339} h={111}>
          <Out port="resample.out" type="geo" label="Curve" />
          <Fields>
            <SelectRow name="Mode" value="Length" />
          </Fields>
          <In port="resample.in" type="geo" label="Curve" />
          <In type="bool" shape="ring" label="Selection" />
          <In port="resample.len" type="float" shape="diamond" label="Length" />
        </Node>

        <Node title="Fill Curve" kind="geometry" x={526} y={339} h={78}>
          <Out port="fill.out" type="geo" label="Mesh" />
          <Fields>
            <Toggle options={["Triangles", "N-gons"]} on="N-gons" />
          </Fields>
          <In port="fill.in" type="geo" label="Curve" />
        </Node>

        <Node title="Flip Faces" kind="geometry" x={647} y={339} h={73}>
          <Out port="flip.out" type="geo" label="Mesh" />
          <In port="flip.in" type="geo" label="Mesh" />
          <In type="bool" shape="ring" label="Selection" />
        </Node>

        <Node title="Extrude Mesh" kind="geometry" x={647} y={429} h={176}>
          <Out port="extrude.out" type="geo" label="Mesh" />
          <Out type="bool" shape="diamond" label="Top" />
          <Out type="bool" shape="diamond" label="Side" />
          <Fields>
            <SelectRow name="Mode" value="Faces" />
          </Fields>
          <In port="extrude.in" type="geo" label="Mesh" />
          <In type="bool" shape="ring" label="Selection" />
          <In type="vec" shape="diamond" label="Offset" />
          <In port="extrude.scale" type="float" shape="diamond" label="Offset Scale" />
          <CheckIn type="bool" label="Individual" on />
        </Node>

        <Node title="Join Geometry" kind="geometry" x={767} y={339} h={56}>
          <Out port="join.out" type="geo" label="Geometry" />
          <In port="join.in" type="geo" shape="multi" label="Geometry" />
        </Node>

        <IndexNode id="pos" title="Position" type="vec" x={803} y={482} />
        <IndexNode id="index1" x={803} y={527} />

        <Node title="Sample Index" kind="geometry" x={938} y={392} h={148}>
          <Out port="sidx.out" type="vec" shape="diamond" label="Value" />
          <Fields>
            <SelectRow name="Data type" value="Vector" />
            <SelectRow name="Domain" value="Instance" />
            <FieldRow>
              <Check label="Clamp" />
            </FieldRow>
          </Fields>
          <In port="sidx.geo" type="geo" label="Geometry" />
          <In port="sidx.val" type="vec" shape="diamond" label="Value" />
          <In port="sidx.idx" type="int" shape="diamond" label="Index" />
        </Node>

        <VectorMultiply id="mul1" x={1059} y={392} h={141} ring={false} values={["-1.000", "0.000", "0.000"]} />
        <TranslateInstances id="ti1" x={1204} y={272} local />

        <Node title="Realize Instances" kind="geometry" x={1325} y={272} h={56}>
          <Out port="real1.out" type="geo" label="Geometry" />
          <In port="real1.in" type="geo" label="Geometry" />
        </Node>

        <Node title="Bounding Box" kind="geometry" x={1445} y={272} h={89}>
          <Out type="geo" label="Bounding Box" />
          <Out type="vec" label="Min" />
          <Out port="bbox.max" type="vec" label="Max" />
          <In port="bbox.in" type="geo" label="Geometry" />
        </Node>

        <NoiseGroup id="noise1" x={1294} y={100} h={129} />
        <Collapsed
          id="add"
          x={1427}
          y={73}
          w={106}
          kind="converter"
          title="Add"
          ins={[
            [2, 6, "diamond"],
            [2, 17, "diamond"],
          ]}
          out={[105, 11]}
        />
        <CombineXYZ id="cxyz1" x={1566} y={60} linked="Z" />
        <VectorMultiply id="mul2" x={1566} y={166} values={["0.500", "0.500", "0.000"]} />

        <Node title="Rotate Instances" kind="geometry" x={1716} y={106} h={123}>
          <Out port="rot1.out" type="geo" label="Instances" />
          <In port="rot1.in" type="geo" label="Instances" />
          <In type="bool" shape="ring" label="Selection" />
          <In port="rot1.rot" type="vec" shape="diamond" label="Rotation" />
          <In port="rot1.pivot" type="vec" shape="ring" label="Pivot Point" />
          <CheckIn type="bool" shape="ring" label="Local Space" on />
        </Node>

        <VectorMultiply id="mul3" x={1715} y={266} values={["0.000", "-0.500", "0.000"]} />
        <TranslateInstances id="ti2" x={1852} y={264} ring />
        <CombineXYZ id="cxyz2" x={1989} y={350} w={93} linked="Z" />
        <TranslateInstances id="ti3" x={2103} y={297} />
        <CombineXYZ id="cxyz3" x={2239} y={342} w={94} linked="X" />
        <RotateInstances id="rot2" x={2348} y={261} h={168} />
        <RotateInstances id="rot3" x={2479} y={353} h={166} />
        <TranslateInstances id="ti4" x={2613} y={480} h={105} />

        <NoiseGroup id="noise2" x={2748} y={533} h={127} />

        <Node title="Add" kind="converter" x={2880} y={527} h={114}>
          <Out port="add2.out" type="float" shape="diamond" label="Value" />
          <Fields>
            <SelectRow name="Operation" value="Add" />
            <FieldRow>
              <Check label="Clamp" />
            </FieldRow>
          </Fields>
          <In port="add2.in" type="float" shape="diamond" label="Value" />
          <Num type="float" shape="ring" label="Value" value="1.000" />
        </Node>

        <Node title="Clamp" kind="converter" x={3004} y={526} h={110}>
          <Out port="clamp.out" type="float" shape="diamond" label="Result" />
          <Fields>
            <SelectRow name="Clamp type" value="Min Max" />
          </Fields>
          <In port="clamp.in" type="float" shape="diamond" label="Value" />
          <Num type="float" shape="ring" label="Min" value="0.000" />
          <Num type="float" shape="ring" label="Max" value="100.000" />
        </Node>

        <Node title="Scale Instances" kind="geometry" x={3138} y={464} h={166}>
          <Out port="scale.out" type="geo" label="Instances" />
          <In port="scale.in" type="geo" label="Instances" />
          <In type="bool" shape="ring" label="Selection" />
          <In port="scale.vec" type="vec" shape="diamond" label="Scale" />
          <In type="vec" shape="ring" label="Center:" />
          <VectorXYZ values={["0.5 m", "0.5 m", "0 m"]} />
          <CheckIn type="bool" shape="ring" label="Local Space" on />
        </Node>

        {[0, 1, 2].map((i) => (
          <Collapsed
            key={i}
            id={`n${i + 1}`}
            x={3319}
            y={528 + i * 30}
            w={103}
            kind="group"
            title="Noise"
            ins={NOISE_PINS}
            out={[103, 11]}
          />
        ))}
        <CombineXYZ id="cxyz4" x={3453} y={512} linked="XYZ" />
        <TranslateInstances id="ti5" x={3602} y={448} h={105} local />

        <Node title="Realize Instances" kind="geometry" x={3735} y={452} h={56}>
          <Out port="real2.out" type="geo" label="Geometry" />
          <In port="real2.in" type="geo" label="Geometry" />
        </Node>

        <Node title="Merge by Distance" kind="geometry" x={3855} y={452} h={111}>
          <Out port="merge.out" type="geo" label="Geometry" />
          <Fields>
            <SelectRow name="Mode" value="All" />
          </Fields>
          <In port="merge.in" type="geo" label="Geometry" />
          <In type="bool" shape="ring" label="Selection" />
          <Num type="float" label="Distance" value="0.001 m" />
        </Node>

        <Node title="Group Output" kind="io" x={3976} y={452} h={54}>
          <In port="go.in" type="geo" label="Geometry" />
          <In type="float" shape="open" />
        </Node>

        <Node title="Multiply Add" kind="converter" x={1521} y={527} h={129}>
          <Out port="madd.out" type="float" shape="diamond" label="Value" />
          <Fields>
            <SelectRow name="Operation" value="Multiply Add" />
            <FieldRow>
              <Check label="Clamp" />
            </FieldRow>
          </Fields>
          <In port="madd.val" type="float" shape="diamond" label="Value" />
          <In port="madd.mul" type="float" shape="diamond" label="Multiplier" />
          <In port="madd.add" type="float" shape="diamond" label="Addend" />
        </Node>

        <Node title="Sample Curve" kind="geometry" x={1656} y={513} h={197}>
          <Out type="float" shape="diamond" label="Value" />
          <Out port="scurve.pos" type="vec" shape="diamond" label="Position" />
          <Out port="scurve.tan" type="vec" shape="diamond" label="Tangent" />
          <Out port="scurve.norm" type="vec" shape="diamond" label="Normal" />
          <Fields>
            <SelectRow name="Data type" value="Float" />
            <Toggle options={["Factor", "Length"]} on="Length" />
            <FieldRow>
              <Check label="All Curves" on />
            </FieldRow>
          </Fields>
          <In port="scurve.in" type="geo" label="Curves" />
          <In type="float" shape="ring" label="Value" />
          <In port="scurve.len" type="float" shape="diamond" label="Length" />
        </Node>

        <AlignEuler id="align1" x={1807} axis="Z" />
        <AlignEuler id="align2" x={1943} axis="X" rotated />

        <IndexNode id="index2" x={226} y={863} />
        <Node title="String Length" kind="converter" x={226} y={908} h={56}>
          <Out port="strlen.out" type="int" label="Length" />
          <In port="strlen.in" type="str" label="String" />
        </Node>

        <Node title="Modulo" kind="converter" x={347} y={863} h={114}>
          <Out port="modulo.out" type="float" shape="diamond" label="Value" />
          <Fields>
            <SelectRow name="Operation" value="Modulo" />
            <FieldRow>
              <Check label="Clamp" />
            </FieldRow>
          </Fields>
          <In port="modulo.a" type="float" shape="diamond" label="Value" />
          <In port="modulo.b" type="float" shape="ring" label="Value" />
        </Node>

        {REROUTES.map(([id, x, y, type]) => (
          <Pin key={id} $x={x} $y={y}>
            <Socket port={id} type={type} shape={type === "geo" ? "dot" : "diamond"} side="in" />
          </Pin>
        ))}
      </Canvas>
    </>
  );
}
